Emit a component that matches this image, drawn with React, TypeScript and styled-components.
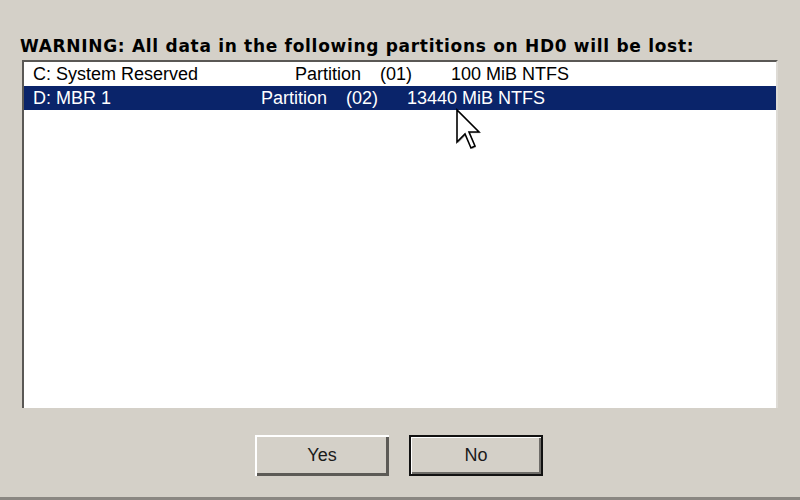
import React from "react";
import styled, { createGlobalStyle } from "styled-components";

const GlobalStyle = createGlobalStyle`
  html, body {
    margin: 0;
    padding: 0;
    background: #d4d0c8;
  }
`;

const Dialog = styled.div`
  position: relative;
  width: 800px;
  height: 500px;
  box-sizing: border-box;
  background: #d4d0c8;
  border-bottom: 3px solid #8a8782;
  padding: 36px 22px 0 20px;
  font-family: "Liberation Sans", Arial, sans-serif;
  overflow: hidden;
`;

const Warning = styled.div`
  font-family: "DejaVu Sans", Verdana, sans-serif;
  font-size: 17px;
  font-weight: 700;
  letter-spacing: 0.7px;
  color: #000;
  line-height: 20px;
  margin-bottom: 4px;
  white-space: nowrap;
`;

const ListBox = styled.div`
  margin-left: 2px;
  width: 756px;
  height: 348px;
  box-sizing: border-box;
  background: #fff;
  border-top: 2px solid #5a5855;
  border-left: 2px solid #5a5855;
  border-right: 2px solid #dedbd5;
`;

const Row = styled.div<{ selected?: boolean }>`
  display: flex;
  align-items: center;
  height: 24px;
  padding-left: 9px;
  font-size: 18px;
  color: ${(p) => (p.selected ? "#fff" : "#000")};
  background: ${(p) => (p.selected ? "#0a246a" : "transparent")};
  white-space: nowrap;
`;

const Cell = styled.span<{ w?: number }>`
  display: inline-block;
  flex: none;
  width: ${(p) => (p.w ? `${p.w}px` : "auto")};
`;

const Buttons = styled.div`
  display: flex;
  justify-content: center;
  gap: 20px;
  margin-top: 27px;
`;

const Button = styled.button<{ isDefault?: boolean }>`
  width: 134px;
  height: 41px;
  box-sizing: border-box;
  background: #d4d0c8;
  font-family: "Liberation Sans", Arial, sans-serif;
  font-size: 18px;
  color: #1a1a1a;
  padding: 0;
  border: ${(p) => (p.isDefault ? "2px solid #111" : "none")};
  box-shadow: ${(p) =>
    p.isDefault
      ? "inset 1px 1px 0 #fff, inset -2px -2px 0 #6e6c68"
      : "inset 2px 2px 0 #fff, inset -3px -3px 0 #5c5a56"};
`;

const Cursor = styled.svg`
  position: absolute;
  left: 455px;
  top: 108px;
`;

const rows = [
  { name: "C: System Reserved", nameW: 262, partW: 85, id: "(01)", idW: 71, size: "100 MiB NTFS" },
  { name: "D: MBR 1", nameW: 228, partW: 85, id: "(02)", idW: 61, size: "13440 MiB NTFS", selected: true },
];

export default function App() {
  return (
    <>
      <GlobalStyle />
      <Dialog>
        <Warning>WARNING: All data in the following partitions on HD0 will be lost:</Warning>
        <ListBox>
          {rows.map((r) => (
            <Row key={r.name} selected={r.selected}>
              <Cell w={r.nameW}>{r.name}</Cell>
              <Cell w={r.partW}>Partition</Cell>
              <Cell w={r.idW}>{r.id}</Cell>
              <Cell>{r.size}</Cell>
            </Row>
          ))}
        </ListBox>
        <Buttons>
          <Button>Yes</Button>
          <Button isDefault>No</Button>
        </Buttons>
        <Cursor width="28" height="42" viewBox="0 0 14 21">
          <path d="M1.6 1.6 L1.6 17.6 L5.6 13.6 L8.6 20.6 L10.6 19.6 L7.6 12.6 L12.6 12.6 Z" fill="#000" opacity="0.25" />
          <path d="M1 1 L1 17 L5 13 L8 20 L10 19 L7 12 L12 12 Z" fill="#fff" stroke="#000" strokeWidth="0.8" strokeLinejoin="miter" />
        </Cursor>
      </Dialog>
    </>
  );
}
